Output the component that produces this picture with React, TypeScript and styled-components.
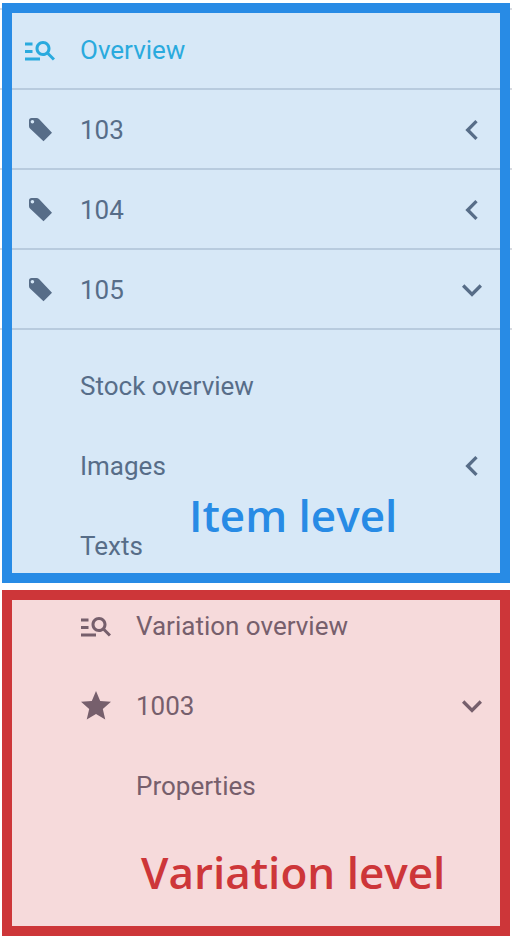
import React from "react";
import styled, { createGlobalStyle } from "styled-components";

const GlobalStyle = createGlobalStyle`
  *, *::before, *::after { box-sizing: border-box; }
  body {
    margin: 0;
    background: #ffffff;
    font-family: Roboto, "Liberation Sans", sans-serif;
  }
`;

const Tree = styled.nav`
  width: 100%;
  overflow: hidden;
`;

const ItemSection = styled.section`
  position: relative;
  padding-top: 8px;
`;

const VariationSection = styled.section`
  position: relative;
  padding-bottom: 112px;
`;

const Frame = styled.div<{ $tone: "item" | "variation" }>`
  position: absolute;
  inset: ${({ $tone }) => ($tone === "item" ? "3px 2px 3px" : "4px 2px 2px")};
  border: 10px solid ${({ $tone }) => ($tone === "item" ? "#288be5" : "#cd3639")};
  background: ${({ $tone }) =>
    $tone === "item" ? "rgba(40, 132, 214, 0.186)" : "rgba(205, 56, 62, 0.186)"};
  background-clip: padding-box;
  pointer-events: none;
`;

const Caption = styled.h2<{ $tone: "item" | "variation" }>`
  position: absolute;
  margin: 0;
  bottom: ${({ $tone }) => ($tone === "item" ? "26px" : "22px")};
  left: ${({ $tone }) => ($tone === "item" ? "177px" : "129px")};
  color: ${({ $tone }) => ($tone === "item" ? "#288be5" : "#cd3639")};
  font-family: "Open Sans", "Noto Sans", sans-serif;
  font-size: 44px;
  font-weight: 600;
  line-height: 64px;
  white-space: nowrap;
`;

const List = styled.ul<{ $divided?: boolean; $spaced?: boolean }>`
  list-style: none;
  margin: 0;
  padding: ${({ $spaced }) => ($spaced ? "16px 0 0" : "0")};
  border-top: ${({ $divided }) => ($divided ? "2px solid #dadce1" : "none")};
`;

const Row = styled.button<{ $level: number; $divided?: boolean; $active?: boolean }>`
  display: flex;
  align-items: center;
  width: 100%;
  height: 80px;
  margin: 0;
  padding: ${({ $divided }) => ($divided ? "2px" : "0")} 20px 0
    ${({ $level }) => 22 + $level * 56}px;
  border: 0;
  border-bottom: ${({ $divided }) => ($divided ? "2px solid #dadce1" : "0")};
  background: none;
  color: ${({ $active }) => ($active ? "#2cb4e1" : "#636978")};
  font: inherit;
  font-size: 26px;
  line-height: 32px;
  text-align: left;
  cursor: pointer;
`;

const IconSlot = styled.span`
  display: flex;
  flex: none;
  align-items: center;
  justify-content: center;
  width: 36px;
  height: 36px;
  margin-right: 22px;
`;

const Label = styled.span`
  flex: 1;
`;

const Icon = styled.svg<{ $size: number }>`
  display: block;
  flex: none;
  width: ${({ $size }) => $size}px;
  height: ${({ $size }) => $size}px;
  fill: currentColor;
`;

const SearchList = () => (
  <Icon $size={36} viewBox="0 0 24 24" aria-hidden="true">
    <path d="M7 9H2V7h5v2zm0 3H2v2h5v-2zm13.59 7l-3.83-3.83c-.8.52-1.74.83-2.76.83-2.76 0-5-2.24-5-5s2.24-5 5-5 5 2.24 5 5c0 1.02-.31 1.96-.83 2.75L22 17.59 20.59 19zM17 11c0-1.65-1.35-3-3-3s-3 1.35-3 3 1.35 3 3 3 3-1.35 3-3zM2 19h10v-2H2v2z" />
  </Icon>
);

const Tag = () => (
  <Icon $size={36} viewBox="0 0 36 36" aria-hidden="true">
    <path
      fillRule="evenodd"
      d="M9.5 6H14.5Q16 6 17 7L30 20.8 21.5 29.3 8 16.5Q7 15.5 7 14V8.5Q7 6 9.5 6ZM10.4 8a1.8 1.8 0 1 0 0 3.6 1.8 1.8 0 0 0 0-3.6Z"
    />
  </Icon>
);

const Star = () => (
  <Icon $size={36} viewBox="0 0 24 24" aria-hidden="true">
    <path d="M12 17.27L18.18 21l-1.64-7.03L22 9.24l-7.19-.61L12 2 9.19 8.63 2 9.24l5.46 4.73L5.82 21z" />
  </Icon>
);

const Chevron = ({ open }: { open: boolean }) => (
  <Icon $size={40} viewBox="0 0 24 24" aria-hidden="true">
    <path
      d={
        open
          ? "M16.59 8.59L12 13.17 7.41 8.59 6 10l6 6 6-6z"
          : "M15.41 7.41L14 6l-6 6 6 6 1.41-1.41L10.83 12z"
      }
    />
  </Icon>
);

interface Entry {
  label: string;
  level: number;
  icon?: React.ReactNode;
  open?: boolean;
  active?: boolean;
}

const items: Entry[] = [
  { label: "Overview", level: 0, icon: <SearchList />, active: true },
  { label: "103", level: 0, icon: <Tag />, open: false },
  { label: "104", level: 0, icon: <Tag />, open: false },
  { label: "105", level: 0, icon: <Tag />, open: true },
];

const details: Entry[] = [
  { label: "Stock overview", level: 0 },
  { label: "Images", level: 0, open: false },
  { label: "Texts", level: 0 },
];

const variations: Entry[] = [
  { label: "Variation overview", level: 1, icon: <SearchList /> },
  { label: "1003", level: 1, icon: <Star />, open: true },
  { label: "Properties", level: 1 },
];

const Entries = ({
  entries,
  divided,
  spaced,
}: {
  entries: Entry[];
  divided?: boolean;
  spaced?: boolean;
}) => (
  <List $divided={divided} $spaced={spaced}>
    {entries.map(({ label, level, icon, open, active }) => (
      <li key={label}>
        <Row
          type="button"
          $level={level}
          $divided={divided}
          $active={active}
          aria-expanded={open}
          aria-current={active ? "page" : undefined}
        >
          <IconSlot>{icon}</IconSlot>
          <Label>{label}</Label>
          {open !== undefined && <Chevron open={open} />}
        </Row>
      </li>
    ))}
  </List>
);

export default function App() {
  return (
    <>
      <GlobalStyle />
      <Tree aria-label="Item navigation">
        <ItemSection>
          <Entries entries={items} divided />
          <Entries entries={details} spaced />
          <Frame $tone="item">
            <Caption $tone="item">Item level</Caption>
          </Frame>
        </ItemSection>
        <VariationSection>
          <Entries entries={variations} />
          <Frame $tone="variation">
            <Caption $tone="variation">Variation level</Caption>
          </Frame>
        </VariationSection>
      </Tree>
    </>
  );
}
